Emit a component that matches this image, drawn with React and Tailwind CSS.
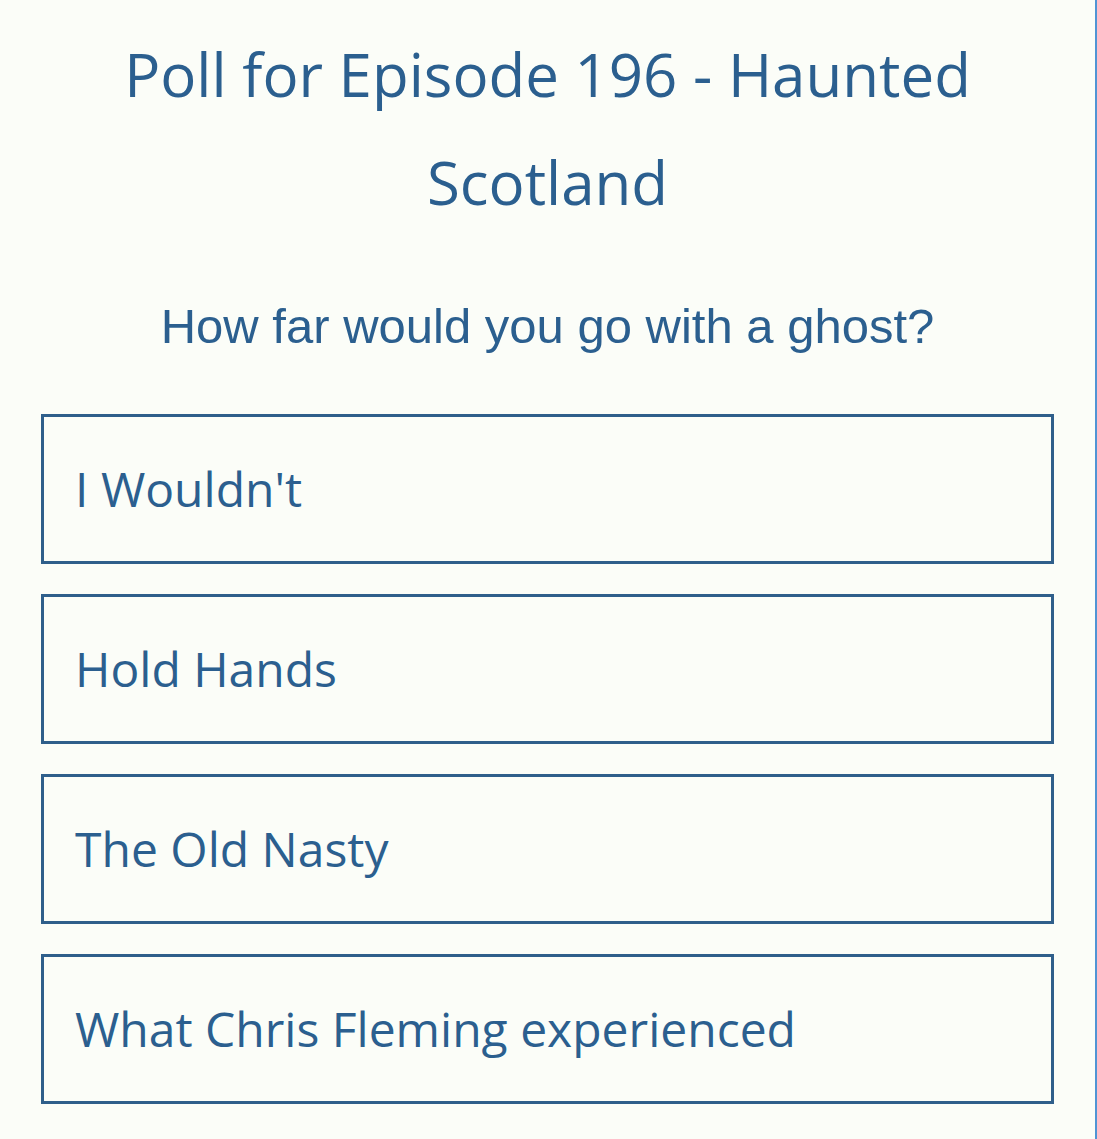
import React from "react";

const options = ["I Wouldn't", "Hold Hands", "The Old Nasty", "What Chris Fleming experienced"];

function App() {
  return (
    <div className="min-h-[1139px] w-[1097px] bg-[#fbfdf8] border-r-2 border-[#5094d4] text-[#2b5f8f]">
      <div className="pt-[20px] px-[41px] pb-[35px]">
        <h1
          className="text-center text-[60px] leading-[108px]"
          style={{ fontFamily: '"Open Sans", sans-serif' }}
        >
          Poll for Episode 196 - Haunted Scotland
        </h1>
        <p
          className="text-center text-[49px] leading-[60px] mt-[60px] mb-[58px]"
          style={{ fontFamily: '"Liberation Sans", Arial, sans-serif' }}
        >
          How far would you go with a ghost?
        </p>
        <div className="flex flex-col gap-[30px]">
          {options.map((opt) => (
            <div
              key={opt}
              className="h-[150px] border-[3px] border-[#2f5f8b] flex items-center px-[31px] text-[48px]"
              style={{ fontFamily: '"Open Sans", sans-serif' }}
            >
              {opt}
            </div>
          ))}
        </div>
      </div>
    </div>
  );
}

export default App;
